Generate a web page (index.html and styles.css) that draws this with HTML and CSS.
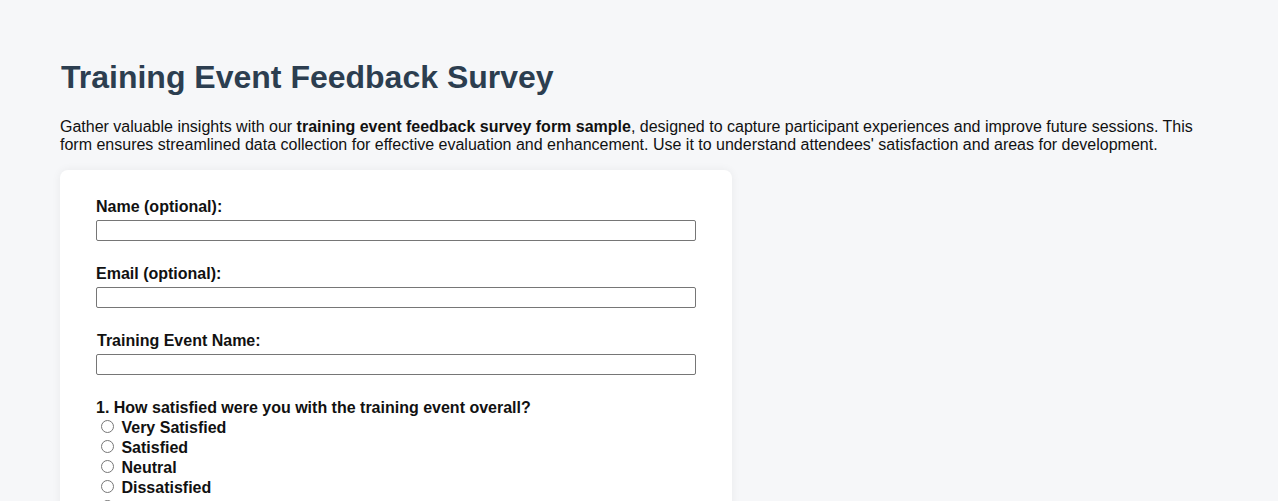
FILE: index.html
```html
<!DOCTYPE html>
<html lang="en">
<head>
<meta charset="utf-8">
<title>Training Event Feedback Survey</title>
<link rel="stylesheet" href="styles.css">
</head>
<body>
<h1 class="title">Training Event Feedback Survey</h1>
<p class="intro">Gather valuable insights with our <strong>training event feedback survey form sample</strong>, designed to capture participant experiences and improve future sessions. This form ensures streamlined data collection for effective evaluation and enhancement. Use it to understand attendees' satisfaction and areas for development.</p>
<form class="card">
  <div class="group">
    <label class="field-label" for="name">Name (optional):</label>
    <input class="text-input" type="text" id="name">
  </div>
  <div class="group">
    <label class="field-label" for="email">Email (optional):</label>
    <input class="text-input" type="email" id="email">
  </div>
  <div class="group">
    <label class="field-label shifted" for="event">Training Event Name:</label>
    <input class="text-input" type="text" id="event">
  </div>
  <div class="group">
    <div class="question">1. How satisfied were you with the training event overall?</div>
    <label class="option"><input type="radio" name="overall"> Very Satisfied</label>
    <label class="option"><input type="radio" name="overall"> Satisfied</label>
    <label class="option"><input type="radio" name="overall"> Neutral</label>
    <label class="option"><input type="radio" name="overall"> Dissatisfied</label>
    <label class="option"><input type="radio" name="overall"> Very Dissatisfied</label>
  </div>
</form>
</body>
</html>
```
FILE: styles.css
```css
html, body {
  margin: 0;
  background: #f6f7f9;
}
body {
  padding: 38px 60px 40px;
  font-family: "Liberation Sans", Arial, sans-serif;
  color: #111;
}
.title {
  font-size: 32px;
  font-weight: bold;
  color: #2c3e50;
  margin: 21.44px 0 21.44px 1px;
}
.intro {
  font-size: 16px;
  margin: 0 0 16px;
  color: #111;
}
.card {
  width: 600px;
  background: #fff;
  border-radius: 8px;
  box-shadow: 0 0 10px rgba(0, 0, 0, 0.06);
  padding: 28px 36px 30px;
}
.group {
  margin-bottom: 24px;
}
.field-label {
  display: block;
  font-size: 16px;
  font-weight: bold;
  margin-bottom: 4px;
}
.shifted {
  padding-left: 1px;
}
.text-input {
  display: block;
  box-sizing: border-box;
  width: 600px;
  height: 21px;
  margin: 0;
  border: 1px solid #767676;
  border-radius: 2px;
  background: #fff;
}
.question {
  font-size: 16px;
  font-weight: bold;
}
.option {
  display: block;
  font-size: 16px;
  font-weight: bold;
  height: 20px;
}
.option input {
  margin: 3px 3px 0 5px;
}
```
